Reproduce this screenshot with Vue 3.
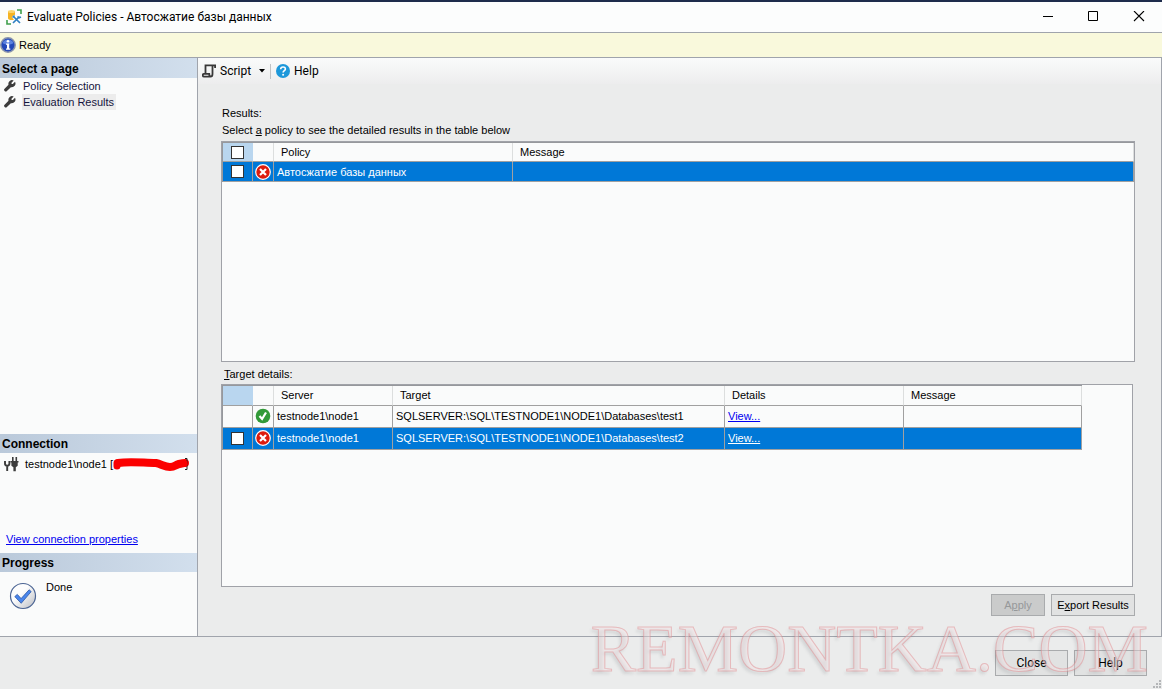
<script setup>
import { ref } from 'vue'

const pages = ['Policy Selection', 'Evaluation Results']
const current = ref(1)
const allChecked = ref(false)
const policies = ref([{ name: 'Автосжатие базы данных', checked: false, message: '' }])
const targets = ref([
  { ok: true, server: 'testnode1\\node1', target: 'SQLSERVER:\\SQL\\TESTNODE1\\NODE1\\Databases\\test1', checked: false },
  { ok: false, server: 'testnode1\\node1', target: 'SQLSERVER:\\SQL\\TESTNODE1\\NODE1\\Databases\\test2', checked: false },
])
</script>

<template>
  <div class="window">
    <header class="titlebar">
      <svg class="app-icon" width="16" height="16" viewBox="0 0 16 16">
        <path d="M11 1h4v4M1 11v4h4" fill="none" stroke="#3f9f4c" stroke-width="1.600" />
        <path d="M2 2.200v7c0 1 1.500 1.800 3.500 1.800S9 10.200 9 9.200v-7z" fill="#f5b324" />
        <ellipse cx="5.500" cy="2.400" rx="3.500" ry="1.500" fill="#fbd46c" />
        <path d="M7 7l7 7M14 7l-7 7" stroke="#fff" stroke-width="3.500" />
        <path d="M7.500 7.500l6.500 6.500M13.500 7.500L7 14" stroke="#2f80c2" stroke-width="1.700" />
        <path d="M11.500 7.500l1.500 1.500 2-1M6.500 8.500l2-2" stroke="#2f80c2" stroke-width="1.400" fill="none" />
      </svg>
      <h1>Evaluate Policies - Автосжатие базы данных</h1>
      <div class="controls">
        <button type="button" aria-label="Minimize">
          <svg width="12" height="12" viewBox="0 0 12 12"><path d="M2 5.500h10" stroke="#000" /></svg>
        </button>
        <button type="button" aria-label="Maximize">
          <svg width="12" height="12" viewBox="0 0 12 12"><path d="M1.500 .5h9v9h-9z" fill="none" stroke="#000" /></svg>
        </button>
        <button type="button" aria-label="Close window">
          <svg width="12" height="12" viewBox="0 0 12 12"><path d="M1 0l10 10M11 0L1 10" stroke="#000" stroke-width="1.100" /></svg>
        </button>
      </div>
    </header>

    <div class="status">
      <svg width="16" height="16" viewBox="0 0 16 16">
        <circle cx="8" cy="8" r="7.200" fill="#2449b8" stroke="#8b95ad" stroke-width="1.500" />
        <path d="M2.500 6a6 6 0 0 1 11 0c-3 2-8 2-11 0z" fill="#5b82df" />
        <circle cx="8" cy="4.200" r="1.300" fill="#fff" />
        <path d="M6 6.500h3.200v5H10.300v1.200H6v-1.200h1v-3.800H6z" fill="#fff" />
      </svg>
      <span>Ready</span>
    </div>

    <div class="body">
      <aside class="sidebar">
        <h2 class="first">Select a page</h2>
        <nav class="pages">
          <button v-for="(p, i) in pages" :key="p" type="button" :class="{ active: i === current }" @click="current = i">
            <svg width="12" height="12" viewBox="0 0 12 12">
              <path d="M11 1.800L8.800 4.100 7.600 3.900 7.500 2.700 9.700.5A3.700 3.700 0 0 0 4.500 4.800L.6 8.700a1.500 1.500 0 0 0 2.300 2.300L6.900 7.200A3.700 3.700 0 0 0 11 1.800z" fill="#3c3c3c" />
            </svg>
            <span>{{ p }}</span>
          </button>
        </nav>
        <h2>Connection</h2>
        <section class="connection">
          <div class="conn-row">
            <svg width="15" height="15" viewBox="0 0 15 15">
              <path d="M1 4v2.500a2 2 0 0 0 4.400 0V4M3.200 8v6" fill="none" stroke="#3c3c3c" stroke-width="1.900" />
              <path d="M6.500 4h8v1.500h-.8v3.200l-1.900 1.500v4H9.400v-4L7.400 8.700V5.500h-.9z" fill="#3c3c3c" />
              <path d="M8.800 0v4.500M12.300 0v4.500" stroke="#3c3c3c" stroke-width="1.600" />
            </svg>
            <span>testnode1\node1 [</span>
            <span class="redacted">
              <svg width="77" height="16" viewBox="0 0 77 16">
                <path d="M5 7C17 5 31 7 43 7c5 1 9 4 14 4s5-2 9-3 6-1 6-1" fill="none" stroke="#fb0000" stroke-width="8" stroke-linecap="round" stroke-linejoin="round" />
                <path d="M4 7v3" stroke="#fb0000" stroke-width="7" stroke-linecap="round" />
                <path d="M72 2.500h2v11h-2" stroke="#222" fill="none" stroke-width="1" />
                <path d="M66 8l5-.5" stroke="#fb0000" stroke-width="7" stroke-linecap="round" />
              </svg>
            </span>
          </div>
          <a href="#">View connection properties</a>
        </section>
        <h2>Progress</h2>
        <section class="progress">
          <svg width="28" height="28" viewBox="0 0 28 28">
            <defs>
              <linearGradient id="orb" x1="0" y1="0" x2="1" y2="1">
                <stop offset=".4" stop-color="#fdfdfd" />
                <stop offset="1" stop-color="#b9bcc2" />
              </linearGradient>
            </defs>
            <circle cx="14" cy="14" r="12.500" fill="url(#orb)" stroke="#4b6493" stroke-width="1.200" />
            <path d="M5.800 14.600l2.500-2.200 3.800 4.200 8-8.800 2.100 1.800-10 11.700z" fill="#4a86ec" stroke="#2b56a5" stroke-width=".8" />
          </svg>
          <span>Done</span>
        </section>
      </aside>

      <main class="main">
        <div class="toolbar">
          <button type="button">
            <svg width="14" height="14" viewBox="0 0 14 14">
              <path d="M3.500 9.500V1.400h9.600V4M10.500 1.500v8.500c0 2-1 2.700-2 2.700H2c-1.600 0-1.600-2.900 0-2.900h5.200c0 1.700.5 2.900 1.800 2.900" fill="none" stroke="#383838" stroke-width="1.800" />
            </svg>
            <span>Script</span>
            <svg class="caret" width="6" height="4" viewBox="0 0 6 4"><path d="M0 0h6L3 3.500z" fill="#000" /></svg>
          </button>
          <i class="sep"></i>
          <button type="button">
            <svg width="14" height="14" viewBox="0 0 14 14">
              <circle cx="7" cy="7" r="7" fill="#1d98da" />
              <path d="M4.700 5.200c0-3 4.700-2.900 4.700-.2 0 1.700-2.300 1.700-2.300 3.600" fill="none" stroke="#fff" stroke-width="1.600" />
              <circle cx="7.100" cy="10.700" r="1" fill="#fff" />
            </svg>
            <span>Help</span>
          </button>
        </div>

        <div class="content">
          <p>Results:</p>
          <p>Select <u>a</u> policy to see the detailed results in the table below</p>
          <div class="grid results">
            <table>
              <colgroup><col class="c-check"><col class="c-icon"><col class="c-policy"><col></colgroup>
              <thead>
                <tr>
                  <th class="corner"><input v-model="allChecked" type="checkbox" aria-label="Select all policies"></th>
                  <th></th><th>Policy</th><th>Message</th>
                </tr>
              </thead>
              <tbody>
                <tr v-for="p in policies" :key="p.name" class="selected">
                  <td class="mid"><input v-model="p.checked" type="checkbox" :aria-label="p.name"></td>
                  <td class="mid">
                    <svg width="16" height="16" viewBox="0 0 16 16">
                      <circle cx="8" cy="8" r="7.300" fill="#dd1c0e" stroke="#fff" stroke-width="1.200" />
                      <path d="M5 5l6 6M11 5l-6 6" stroke="#fff" stroke-width="2.200" />
                    </svg>
                  </td>
                  <td>{{ p.name }}</td>
                  <td>{{ p.message }}</td>
                </tr>
              </tbody>
            </table>
          </div>

          <p class="details-label"><u>T</u>arget details:</p>
          <div class="grid details">
            <table>
              <colgroup><col class="c-check"><col class="c-icon"><col class="c-server"><col class="c-target"><col class="c-details"><col></colgroup>
              <thead>
                <tr><th class="corner"></th><th></th><th>Server</th><th>Target</th><th>Details</th><th>Message</th></tr>
              </thead>
              <tbody>
                <tr v-for="t in targets" :key="t.target" :class="{ selected: !t.ok }">
                  <td class="mid"><input v-if="!t.ok" v-model="t.checked" type="checkbox" :aria-label="t.target"></td>
                  <td class="mid">
                    <svg v-if="t.ok" width="16" height="16" viewBox="0 0 16 16">
                      <circle cx="8" cy="8" r="7.300" fill="#329a38" />
                      <path d="M4.500 8l2.600 3L11 4.500" fill="none" stroke="#fff" stroke-width="2.200" />
                    </svg>
                    <svg v-else width="16" height="16" viewBox="0 0 16 16">
                      <circle cx="8" cy="8" r="7.300" fill="#dd1c0e" stroke="#fff" stroke-width="1.200" />
                      <path d="M5 5l6 6M11 5l-6 6" stroke="#fff" stroke-width="2.200" />
                    </svg>
                  </td>
                  <td>{{ t.server }}</td>
                  <td>{{ t.target }}</td>
                  <td><a href="#">View...</a></td>
                  <td></td>
                </tr>
              </tbody>
            </table>
          </div>

          <div class="actions">
            <button type="button" class="btn apply" disabled>A<u>p</u>ply</button>
            <button type="button" class="btn export">E<u>x</u>port Results</button>
          </div>
        </div>
      </main>
    </div>

    <footer class="footer">
      <button type="button" class="btn">Close</button>
      <button type="button" class="btn">Help</button>
      <div class="watermark">REMONTKA.COM</div>
      <svg class="grip" width="9" height="9" viewBox="0 0 9 9">
        <path d="M6 0h2v2H6zM3 3h2v2H3zM6 3h2v2H6zM0 6h2v2H0zM3 6h2v2H3zM6 6h2v2H6z" fill="#b4b6b8" />
      </svg>
    </footer>
  </div>
</template>

<style>
body {
  margin: 0;
}
</style>

<style scoped>
.window {
  box-sizing: border-box;
  display: flex;
  flex-direction: column;
  height: 100vh;
  border-top: 2px solid #1e2c4c;
  background: #ebecec;
  color: #000;
  font: 11px/16px "Liberation Sans", Arial, sans-serif;
}
button {
  padding: 0;
  border: 0;
  background: none;
  color: inherit;
  font: inherit;
}
svg {
  display: block;
  flex: none;
}
h1, h2, p {
  margin: 0;
}
.titlebar {
  display: flex;
  align-items: center;
  height: 30px;
  flex: none;
  padding-left: 6px;
  background: #fcfdfd;
  border-bottom: 1px solid #a0a4ac;
}
h1 {
  flex: 1;
  margin-left: 5px;
  font: 12px/16px Roboto, "Open Sans", sans-serif;
}
.controls {
  display: flex;
}
.controls button {
  display: grid;
  place-items: center;
  width: 46px;
  height: 28px;
}
.status {
  display: flex;
  align-items: center;
  gap: 3px;
  height: 24px;
  flex: none;
  background: #f9f9dc;
  border-bottom: 1px solid #a0a4ac;
}
.body {
  display: flex;
  flex: 1;
  min-height: 0;
  border-right: 1px solid #a0a4ac;
  border-bottom: 1px solid #a0a4ac;
}
.sidebar {
  display: flex;
  flex-direction: column;
  width: 197px;
  flex: none;
  background: #fafbfb;
  border-right: 1px solid #a0a4ac;
}
h2 {
  height: 19px;
  flex: none;
  padding-left: 2px;
  background: linear-gradient(90deg, #bac9da, #d2dfed);
  font: bold 12px/20px "Liberation Sans", Arial, sans-serif;
}
h2.first {
  height: 20px;
  line-height: 22px;
}
.pages {
  display: flex;
  flex-direction: column;
  align-items: flex-start;
  flex: 1;
}
.pages button {
  display: flex;
  align-items: center;
  gap: 6px;
  height: 16px;
  padding-left: 4px;
}
.pages span {
  padding: 0 2px 0 1px;
  color: #14143c;
}
.pages .active span {
  background: #ececec;
}
.connection {
  display: flex;
  flex-direction: column;
  justify-content: space-between;
  align-items: flex-start;
  box-sizing: border-box;
  height: 100px;
  padding: 3px 0 6px;
}
.connection a {
  margin-left: 6px;
}
a {
  color: #0000f0;
  text-decoration: underline;
}
.conn-row {
  display: flex;
  align-items: center;
  padding-left: 4px;
}
.conn-row > svg {
  margin-right: 6px;
}
.progress {
  display: flex;
  gap: 9px;
  box-sizing: border-box;
  height: 64px;
  padding: 7px 0 0 9px;
}
.progress svg {
  margin-top: 3px;
}
.main {
  display: flex;
  flex-direction: column;
  flex: 1;
  min-width: 0;
  background: #ebecec;
}
.toolbar {
  display: flex;
  align-items: center;
  height: 26px;
  flex: none;
  padding-left: 4px;
  background: linear-gradient(#fafbfb, #ededee);
  font: 12px/16px Roboto, "Open Sans", sans-serif;
}
.toolbar button {
  display: flex;
  align-items: center;
  gap: 4px;
}
.toolbar .caret {
  margin-left: 4px;
}
.sep {
  width: 1px;
  height: 15px;
  margin: 0 5px;
  background: #c0c2c4;
}
.content {
  display: flex;
  flex-direction: column;
  flex: 1;
  min-height: 0;
  padding: 21px 26px 20px 23px;
}
.content p {
  padding-left: 1px;
  line-height: 17px;
}
.grid {
  box-sizing: border-box;
  border: 1px solid #a0a2a8;
  background: #fafbfb;
}
.results {
  flex: 221 1 0;
  margin-top: 2px;
}
.details {
  flex: 203 1 0;
  margin-right: 2px;
}
.content .details-label {
  padding: 4px 0 2px 3px;
  line-height: 16px;
}
table {
  width: 100%;
  table-layout: fixed;
  border-collapse: separate;
  border-spacing: 0;
  border-top: 1px solid #96989c;
  border-left: 1px solid #96989c;
}
.details table {
  width: calc(100% - 50px);
}
.c-check { width: 30px; }
.c-icon { width: 21px; }
.c-policy { width: 239px; }
.c-server { width: 119px; }
.c-target { width: 332px; }
.c-details { width: 179px; }
th, td {
  box-sizing: border-box;
  height: 20px;
  padding: 0 3px;
  border-right: 1px solid #a0a0a0;
  border-bottom: 1px solid #a0a0a0;
  text-align: left;
  font-weight: normal;
  line-height: 16px;
  white-space: nowrap;
}
th {
  height: 19px;
  padding: 0 7px;
  border-right-color: #dcdede;
}
.details th {
  height: 20px;
}
.details td {
  height: 22px;
}
th.corner {
  padding: 0;
  border-right-color: #b9d6ef;
  background: #b9d6ef;
}
.mid {
  padding: 0;
}
.mid svg {
  margin: 0 auto 0 2px;
}
.selected {
  background: #0078d7;
  color: #fff;
}
.selected a {
  color: #fff;
}
input {
  display: block;
  appearance: none;
  box-sizing: border-box;
  width: 13px;
  height: 13px;
  margin: 0 auto 0 8px;
  border: 1px solid #333;
  background: #fff;
}
.actions {
  display: flex;
  justify-content: flex-end;
  gap: 6px;
  padding-top: 7px;
}
.btn {
  box-sizing: border-box;
  width: 73px;
  height: 26px;
  border: 1px solid #a9abad;
  background: #e1e2e2;
  font: 12px/16px Roboto, "Open Sans", sans-serif;
}
.actions .btn {
  height: 22px;
  font: 11px/16px "Liberation Sans", Arial, sans-serif;
}
.actions .apply {
  width: 54px;
  background: #cacbcb;
  color: #96989a;
}
.actions .export {
  width: 84px;
}
.footer {
  position: relative;
  display: flex;
  justify-content: flex-end;
  gap: 6px;
  box-sizing: border-box;
  height: 52px;
  flex: none;
  padding: 13px 15px 0 0;
}
.watermark {
  position: absolute;
  right: 14px;
  bottom: 11px;
  color: rgba(246, 228, 229, 0.4);
  -webkit-text-stroke: 1px rgba(226, 140, 144, 0.5);
  text-shadow: -2px 3px 3px rgba(90, 95, 100, 0.15);
  font: 68px/60px "Liberation Serif", "Times New Roman", serif;
  pointer-events: none;
}
.grip {
  position: absolute;
  right: 0;
  bottom: 0;
}
</style>
